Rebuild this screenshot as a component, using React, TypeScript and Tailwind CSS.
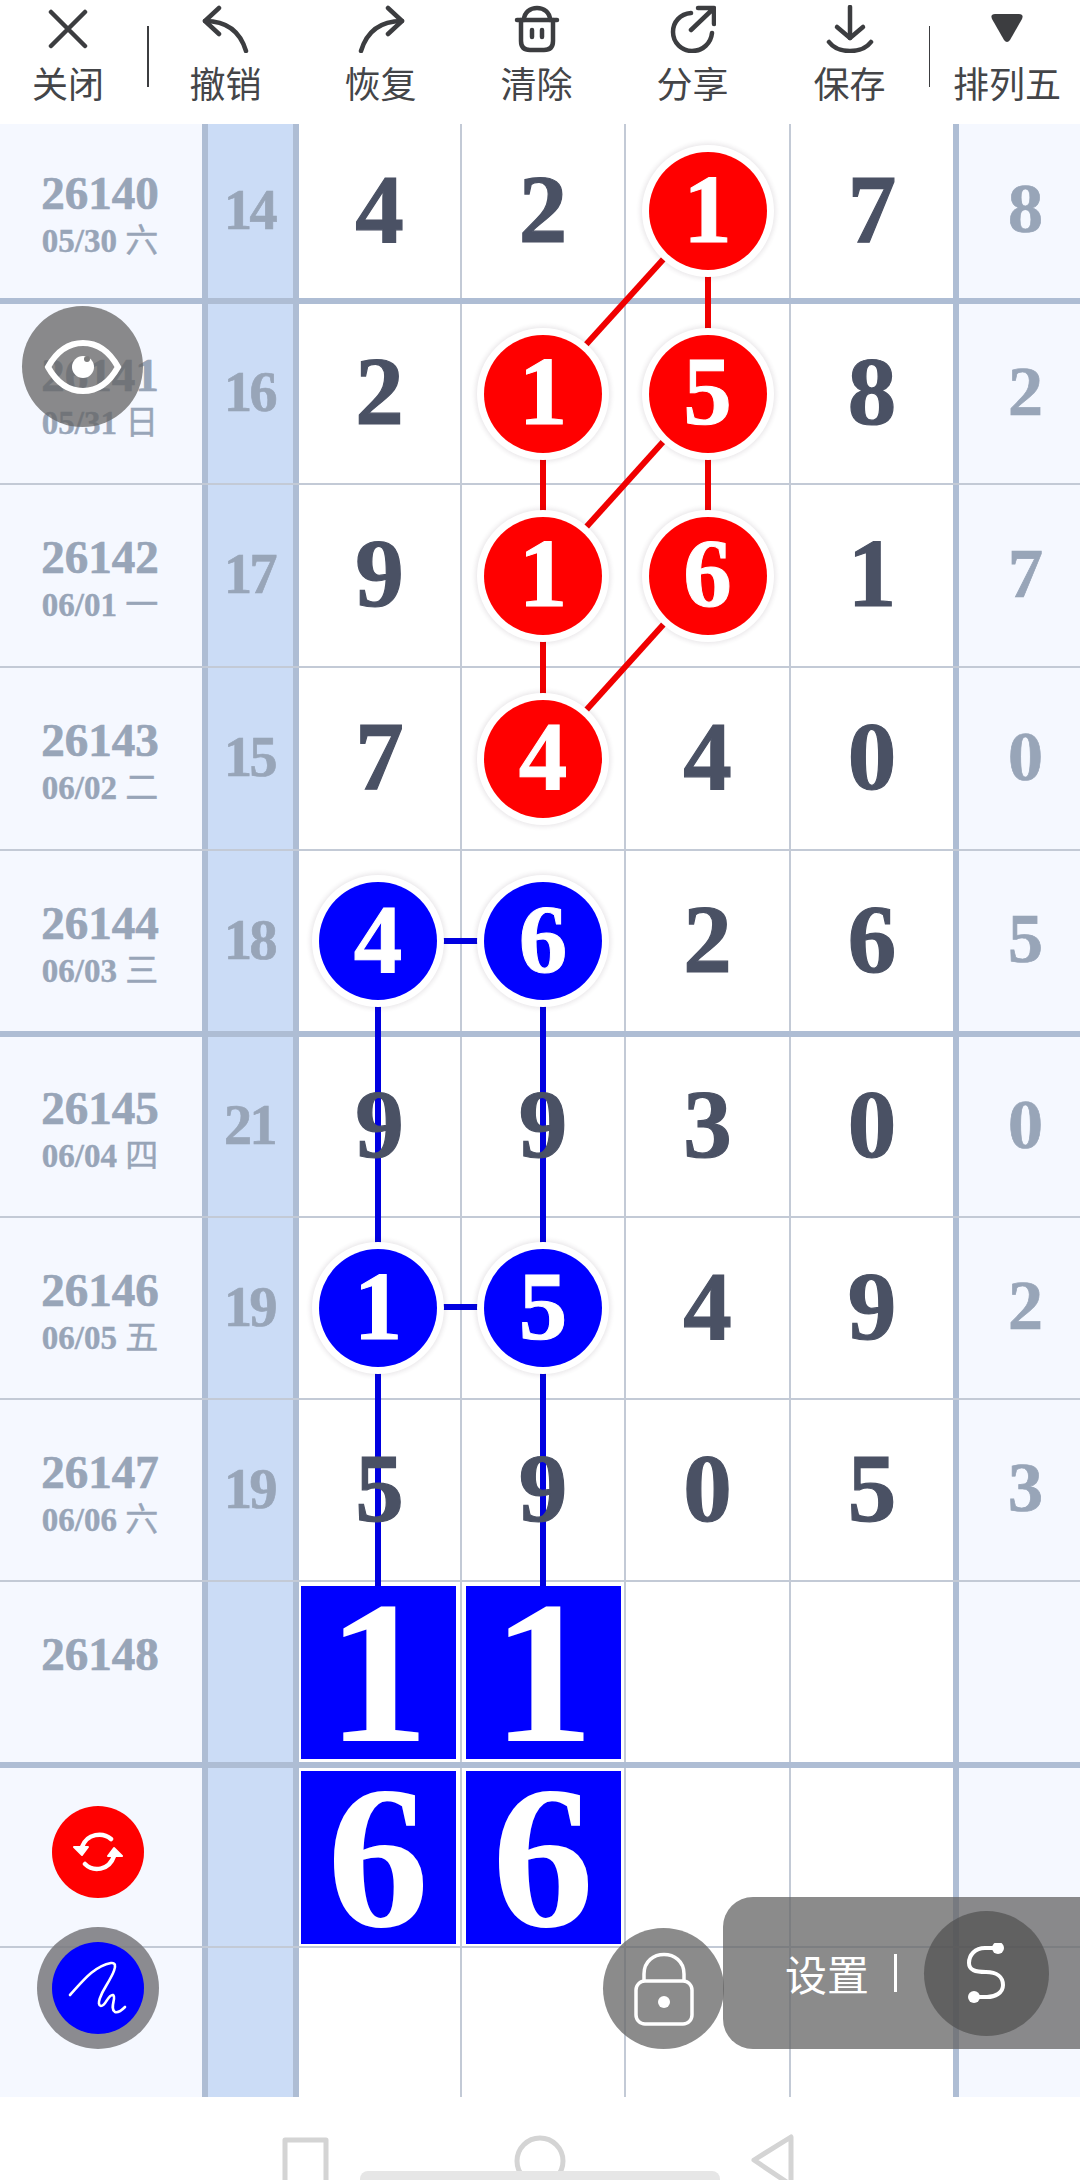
import React from "react";

type Cell = string | { c: "r" | "b" | "s"; v: string } | null;
type Row = {
  id: string;
  date: string;
  sum: string;
  cells: Cell[];
  right: string;
  h: string;
  border: "thin" | "thick" | "none";
};

const r = (v: string): Cell => ({ c: "r", v });
const b = (v: string): Cell => ({ c: "b", v });
const s = (v: string): Cell => ({ c: "s", v });

const rows: Row[] = [
  { id: "26140", date: "05/30 六", sum: "14", cells: ["4", "2", r("1"), "7"], right: "8", h: "h-[180px]", border: "thick" },
  { id: "26141", date: "05/31 日", sum: "16", cells: ["2", r("1"), r("5"), "8"], right: "2", h: "h-[181px]", border: "thin" },
  { id: "26142", date: "06/01 一", sum: "17", cells: ["9", r("1"), r("6"), "1"], right: "7", h: "h-[183px]", border: "thin" },
  { id: "26143", date: "06/02 二", sum: "15", cells: ["7", r("4"), "4", "0"], right: "0", h: "h-[183px]", border: "thin" },
  { id: "26144", date: "06/03 三", sum: "18", cells: [b("4"), b("6"), "2", "6"], right: "5", h: "h-[186px]", border: "thick" },
  { id: "26145", date: "06/04 四", sum: "21", cells: ["9", "9", "3", "0"], right: "0", h: "h-[181px]", border: "thin" },
  { id: "26146", date: "06/05 五", sum: "19", cells: [b("1"), b("5"), "4", "9"], right: "2", h: "h-[182px]", border: "thin" },
  { id: "26147", date: "06/06 六", sum: "19", cells: ["5", "9", "0", "5"], right: "3", h: "h-[182px]", border: "thin" },
  { id: "26148", date: "", sum: "", cells: [s("1"), s("1"), null, null], right: "", h: "h-[186px]", border: "thick" },
  { id: "", date: "", sum: "", cells: [s("6"), s("6"), null, null], right: "", h: "h-[180px]", border: "thin" },
  { id: "", date: "", sum: "", cells: [null, null, null, null], right: "", h: "h-[149px]", border: "none" },
];

const serif = "font-['Liberation_Serif','Noto_Sans_CJK_SC',serif]";
const colW = ["w-[163px]", "w-[164px]", "w-[165px]", "w-[162px]"];

function Digit({ cell, first }: { cell: Cell; first: boolean }) {
  if (cell === null) return null;
  if (typeof cell === "string") {
    return (
      <span className="relative z-[2] pb-[4px] text-[97px] leading-none font-bold text-[#4a5164] [-webkit-text-stroke:1.2px_#4a5164]">
        {cell}
      </span>
    );
  }
  if (cell.c === "s") {
    return (
      <div
        className={`relative z-[2] w-[155px] h-[173px] bg-[#0000ff] flex items-center justify-center text-white text-[204px] leading-[173px] font-bold ${first ? "mr-[3px]" : ""}`}
      >
        {cell.v}
      </div>
    );
  }
  const bg = cell.c === "r" ? "bg-[#ff0000]" : "bg-[#0000ff]";
  return (
    <div
      className={`relative z-[2] w-[118px] h-[118px] pb-[4px] rounded-full ${bg} shadow-[0_0_0_7px_#ffffff,0_0_4px_9px_rgba(60,40,60,0.1)] flex items-center justify-center text-white text-[97px] leading-none font-bold [-webkit-text-stroke:1px_#ffffff] ${first ? "mr-[3px]" : ""}`}
    >
      {cell.v}
    </div>
  );
}

function TableRow({ row }: { row: Row }) {
  const line =
    row.border === "thick"
      ? "border-b-[6px] border-[#aebdd4]"
      : row.border === "thin"
        ? "border-b-2 border-[#c3cad6]"
        : "";
  const parts = row.date.split(" ");
  return (
    <div className={`flex w-full ${row.h} ${line} box-border`}>
      <div className="w-[202px] shrink-0 pt-[4px] pr-[2px] bg-[#f5f8ff] flex flex-col items-center justify-center text-[#98a5b8] font-bold">
        {row.id && <div className="text-[47px] leading-[52px] [-webkit-text-stroke:0.7px_#98a5b8]">{row.id}</div>}
        {row.id && (
          <div className="text-[33px] leading-[38px] h-[38px] mt-[3px] whitespace-pre [-webkit-text-stroke:0.4px_#98a5b8]">
            {parts[0]}
            {parts[1] ? " " : ""}
            <span className="font-normal">{parts[1]}</span>
          </div>
        )}
      </div>
      <div className="w-[97px] shrink-0 box-border border-x-[6px] border-[#aebdd4] bg-[#cbdcf6] pb-[3px] pr-[2px] flex items-center justify-center text-[#98a5b8] text-[56px] leading-none font-bold tracking-[-2.5px] [-webkit-text-stroke:0.7px_#98a5b8]">
        {row.sum}
      </div>
      {row.cells.map((c, i) => (
        <div
          key={i}
          className={`${colW[i]} shrink-0 box-border flex items-center justify-center ${i < 3 ? "border-r-2 border-[#c3cad6]" : ""}`}
        >
          <Digit cell={c} first={i === 0} />
        </div>
      ))}
      <div className="flex-1 box-border border-l-[6px] border-[#aebdd4] bg-[#f5f8ff] pl-[12px] pb-[4px] flex items-center justify-center text-[#98a5b8] text-[70px] leading-none font-bold [-webkit-text-stroke:0.7px_#98a5b8]">
        {row.right}
      </div>
    </div>
  );
}

function ToolItem({ label, w, children }: { label: string; w: string; children: React.ReactNode }) {
  return (
    <div className={`${w} shrink-0 flex flex-col items-center`}>
      <div className="h-[60px] flex items-start justify-center pt-[5px]">{children}</div>
      <div className="text-[36px] leading-[36px] mt-[4px] text-[#444548] whitespace-nowrap">{label}</div>
    </div>
  );
}

const stroke = {
  fill: "none",
  stroke: "#3c3d40",
  strokeWidth: 4.5,
  strokeLinecap: "round" as const,
  strokeLinejoin: "round" as const,
};

function Links() {
  const red = [
    [708, 210, 543, 392],
    [708, 210, 708, 392],
    [543, 392, 543, 575],
    [708, 392, 543, 575],
    [708, 392, 708, 575],
    [708, 575, 543, 758],
    [543, 575, 543, 758],
  ];
  const blue = [
    [378, 941, 543, 941],
    [378, 941, 378, 1307],
    [543, 941, 543, 1307],
    [378, 1307, 543, 1307],
    [378, 1307, 378, 1590],
    [543, 1307, 543, 1590],
  ];
  return (
    <svg className="absolute left-0 top-0 z-[1] w-[1080px] h-[1971px]" viewBox="0 124 1080 1971">
      {red.map((l, i) => (
        <line key={i} x1={l[0]} y1={l[1]} x2={l[2]} y2={l[3]} stroke="#f00000" strokeWidth={6} />
      ))}
      {blue.map((l, i) => (
        <line key={i} x1={l[0]} y1={l[1]} x2={l[2]} y2={l[3]} stroke="#0000e0" strokeWidth={6} />
      ))}
    </svg>
  );
}

export default function App() {
  return (
    <div className={`relative w-[1080px] h-[2180px] overflow-hidden bg-white ${serif}`}>
      <header className="flex h-[124px] font-['Noto_Sans_CJK_SC','Noto_Sans',sans-serif] font-normal">
        <ToolItem label="关闭" w="w-[136px]">
          <svg className="mt-[4px]" width="40" height="40" viewBox="0 0 40 40" {...stroke}>
            <path d="M3 3 L37 37 M37 3 L3 37" />
          </svg>
        </ToolItem>
        <div className="ml-[11px] mt-[26px] w-[3px] h-[61px] bg-[#3c3d40]" />
        <ToolItem label="撤销" w="w-[154px]">
          <svg width="48" height="48" viewBox="0 0 48 48" {...stroke}>
            <path d="M17 3 L3 16 L17 29" />
            <path d="M3 16 C24 16 38 26 44 46" />
          </svg>
        </ToolItem>
        <ToolItem label="恢复" w="w-[156px]">
          <svg width="48" height="48" viewBox="0 0 48 48" {...stroke}>
            <path d="M31 3 L45 16 L31 29" />
            <path d="M45 16 C24 16 10 26 4 46" />
          </svg>
        </ToolItem>
        <ToolItem label="清除" w="w-[156px]">
          <svg width="46" height="48" viewBox="0 0 46 48" {...stroke}>
            <path d="M3 15 H43" />
            <path d="M10 15 C10 -1 36 -1 36 15" />
            <path d="M7 15 V36 C7 42 10 45 16 45 H30 C36 45 39 42 39 36 V15" />
            <path d="M18 25 V32 M28 25 V32" />
          </svg>
        </ToolItem>
        <ToolItem label="分享" w="w-[156px]">
          <svg width="46" height="48" viewBox="0 0 46 48" {...stroke}>
            <path d="M21 8 C10 9 3 17 3 27 C3 38 12 46 22 46 C33 46 41 38 42 28" />
            <path d="M21 25 L43 4 M28 3 H44 V19" />
          </svg>
        </ToolItem>
        <ToolItem label="保存" w="w-[158px]">
          <svg width="48" height="48" viewBox="0 0 48 48" {...stroke}>
            <path d="M24 2 V33" />
            <path d="M11 22 L24 33 L37 22" />
            <path d="M3 37 C12 49 36 49 45 37" />
          </svg>
        </ToolItem>
        <div className="mt-[26px] w-[3px] h-[61px] bg-[#3c3d40]" />
        <ToolItem label="排列五" w="w-[146px] ml-[4px]">
          <svg className="mt-[8px]" width="34" height="30" viewBox="0 0 34 30">
            <path d="M5 1 H29 Q34 1 32 6 L20 27 Q17 31 14 27 L2 6 Q0 1 5 1 Z" fill="#3c3d40" />
          </svg>
        </ToolItem>
      </header>

      <main className="relative h-[1971px]">
        <Links />
        {rows.map((row, i) => (
          <TableRow key={i} row={row} />
        ))}
      </main>

      <nav className="h-[85px]">
        <svg className="block" width="1080" height="85" viewBox="0 2095 1080 85" fill="none" stroke="#d4d4d4" strokeWidth="5">
          <path d="M285 2140 H326 V2190 H285 Z" strokeLinejoin="round" />
          <circle cx="540" cy="2161" r="23" />
          <path d="M791 2137 V2185 L754 2160 Z" strokeLinejoin="round" />
          <rect x="360" y="2171" width="360" height="16" rx="8" fill="#e6e6e6" stroke="none" />
        </svg>
      </nav>

      {/* eye */}
      <div className="absolute left-[22px] top-[306px] z-10 w-[121px] h-[121px] rounded-full bg-[rgba(100,100,100,0.75)] flex items-center justify-center">
        <svg width="78" height="56" viewBox="0 0 78 56">
          <path d="M4 28 C14 10 27 4 39 4 C51 4 64 10 74 28 C64 46 51 52 39 52 C27 52 14 46 4 28 Z" fill="none" stroke="#fff" strokeWidth="6" />
          <circle cx="39" cy="28" r="11" fill="#fff" />
          <circle cx="43" cy="20" r="3" fill="#7c7c7c" />
        </svg>
      </div>

      {/* refresh */}
      <div className="absolute left-[52px] top-[1806px] z-10 w-[92px] h-[92px] rounded-full bg-[#ff0000] flex items-center justify-center">
        <svg width="50" height="40" viewBox="0 0 50 40" fill="none" stroke="#fff" strokeWidth="4.5" strokeLinecap="round">
          <path d="M38 7 C30 0 14 1 9 15" />
          <path d="M12 32 C20 40 36 39 41 24" />
          <path d="M1 15 L9 23 L15 15 Z" fill="#fff" strokeWidth="2" strokeLinejoin="round" />
          <path d="M35 24 L41 16 L49 24 Z" fill="#fff" strokeWidth="2" strokeLinejoin="round" />
        </svg>
      </div>

      {/* pen */}
      <div className="absolute left-[37px] top-[1927px] z-10 w-[122px] h-[122px] rounded-full bg-[rgba(120,120,125,0.85)] flex items-center justify-center">
        <div className="w-[92px] h-[92px] rounded-full bg-[#0000ff] flex items-center justify-center">
          <svg width="60" height="60" viewBox="0 0 60 60" fill="none" stroke="#fff" strokeWidth="2.6" strokeLinecap="round" strokeLinejoin="round">
            <path d="M2 37 C14 24 26 8 43 5 C52 4 44 18 38 28 C33 36 28 47 33 48 C38 48 40 36 45 37 C49 39 41 50 47 54 C50 55 54 52 57 49" />
          </svg>
        </div>
      </div>

      {/* lock */}
      <div className="absolute left-[603px] top-[1928px] z-10 w-[121px] h-[121px] rounded-full bg-[rgba(100,100,100,0.75)] flex items-center justify-center">
        <svg width="60" height="74" viewBox="0 0 60 74" fill="none" stroke="#fff" strokeWidth="3.5">
          <path d="M10 30 V22 C10 -4 50 -4 50 22 V30" />
          <rect x="2" y="29" width="56" height="43" rx="9" />
          <circle cx="30" cy="50" r="6" fill="#fff" stroke="none" />
        </svg>
      </div>

      {/* settings */}
      <div className="absolute left-[723px] top-[1897px] z-10 w-[357px] h-[152px] rounded-l-[30px] bg-[rgba(100,100,100,0.75)] flex items-center">
        <div className="ml-[62px] text-[42px] leading-none text-white font-['Noto_Sans_CJK_SC',sans-serif] whitespace-nowrap">设置</div>
        <div className="ml-[25px] w-[3px] h-[38px] bg-white" />
        <div className="ml-[27px] w-[125px] h-[125px] rounded-full bg-[rgba(80,80,80,0.7)] flex items-center justify-center">
          <svg width="44" height="60" viewBox="0 0 44 60" fill="none" stroke="#fff" strokeWidth="4" strokeLinecap="round">
            <path d="M33 5 H20 C10 5 4 12 4 20 C4 27 10 29 21 29 C32 29 38 34 38 42 C38 50 30 54 22 54 H9" />
            <circle cx="33" cy="5" r="6" fill="#fff" stroke="none" />
            <circle cx="9" cy="54" r="6" fill="#fff" stroke="none" />
          </svg>
        </div>
      </div>
    </div>
  );
}
